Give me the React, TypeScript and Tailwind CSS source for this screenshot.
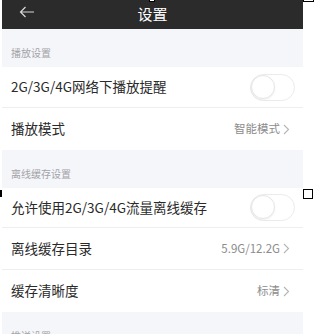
import React from "react";

type Row = {
  label: string;
  value?: string;
  toggle?: boolean;
  h: string;
  divider?: boolean;
};

const Toggle: React.FC = () => (
  <div className="w-[45px] h-[27px] rounded-full border-[1.5px] border-[#ebebeb] bg-white relative">
    <div className="absolute left-0 top-0 w-[24px] h-[24px] rounded-full border border-[#e6e6e6] bg-white shadow-[0_1px_2px_rgba(0,0,0,0.06)]" />
  </div>
);

const Chevron: React.FC = () => (
  <svg width="7" height="11" viewBox="0 0 7 11" className="ml-[3px]">
    <path d="M1 1l4.5 4.5L1 10" fill="none" stroke="#b5b5b5" strokeWidth="1.1" />
  </svg>
);

const Section: React.FC<{ title: string; h: string }> = ({ title, h }) => (
  <div className={`${h} bg-[#f5f6fa] flex items-end pl-[9px] pb-[9px]`}>
    <span className="text-[10px] text-[#a3a3a8] leading-none">{title}</span>
  </div>
);

const SettingRow: React.FC<{ row: Row }> = ({ row }) => (
  <div
    className={`${row.h} bg-white flex items-center justify-between pl-[9px] ${
      row.toggle ? "pr-[8px]" : "pr-[13px]"
    } ${row.divider ? "border-b border-[#eeeeee]" : ""}`}
  >
    <span className="text-[13.5px] text-[#2a2a2a] leading-none">{row.label}</span>
    {row.toggle && <Toggle />}
    {row.value && (
      <span className="flex items-center text-[11.5px] text-[#8c8c8c] leading-none">
        {row.value}
        <Chevron />
      </span>
    )}
  </div>
);

export default function App() {
  return (
    <div
      className="relative w-[315px] h-[334px] bg-white overflow-hidden"
      style={{ fontFamily: '"Noto Sans CJK SC", "Liberation Sans", sans-serif' }}
    >
      <div className="ml-[2px] w-[301px]">
        <div className="h-[29px] bg-[#2b2b2c] relative flex items-center justify-center">
          <svg width="16" height="12" viewBox="0 0 16 12" className="absolute left-[17px] top-[6px]">
            <path d="M15 6H1.5M6.5 1L1.5 6l5 5" fill="none" stroke="#d8d8d8" strokeWidth="1.2" />
          </svg>
          <span className="text-[15px] text-white leading-none -mt-[3px]">设置</span>
        </div>
        <Section title="播放设置" h="h-[38px]" />
        <SettingRow row={{ label: "2G/3G/4G网络下播放提醒", toggle: true, h: "h-[41px]", divider: true }} />
        <SettingRow row={{ label: "播放模式", value: "智能模式", h: "h-[42px]" }} />
        <Section title="离线缓存设置" h="h-[38px]" />
        <SettingRow row={{ label: "允许使用2G/3G/4G流量离线缓存", toggle: true, h: "h-[40px]", divider: true }} />
        <SettingRow row={{ label: "离线缓存目录", value: "5.9G/12.2G", h: "h-[42px]", divider: true }} />
        <SettingRow row={{ label: "缓存清晰度", value: "标清", h: "h-[42px]" }} />
        <Section title="推送设置" h="h-[38px]" />
      </div>
      {/* selection handles */}
      <div className="absolute left-[149px] top-[-9px] w-[6px] h-[11px] border border-black bg-white" />
      <div className="absolute left-[303px] top-[-9px] w-[11px] h-[11px] border border-black bg-white" />
      <div className="absolute left-0 top-[190px] w-[2px] h-[7px] bg-black" />
      <div className="absolute left-[303px] top-[189px] w-[10px] h-[10px] border border-black bg-white" />
    </div>
  );
}
